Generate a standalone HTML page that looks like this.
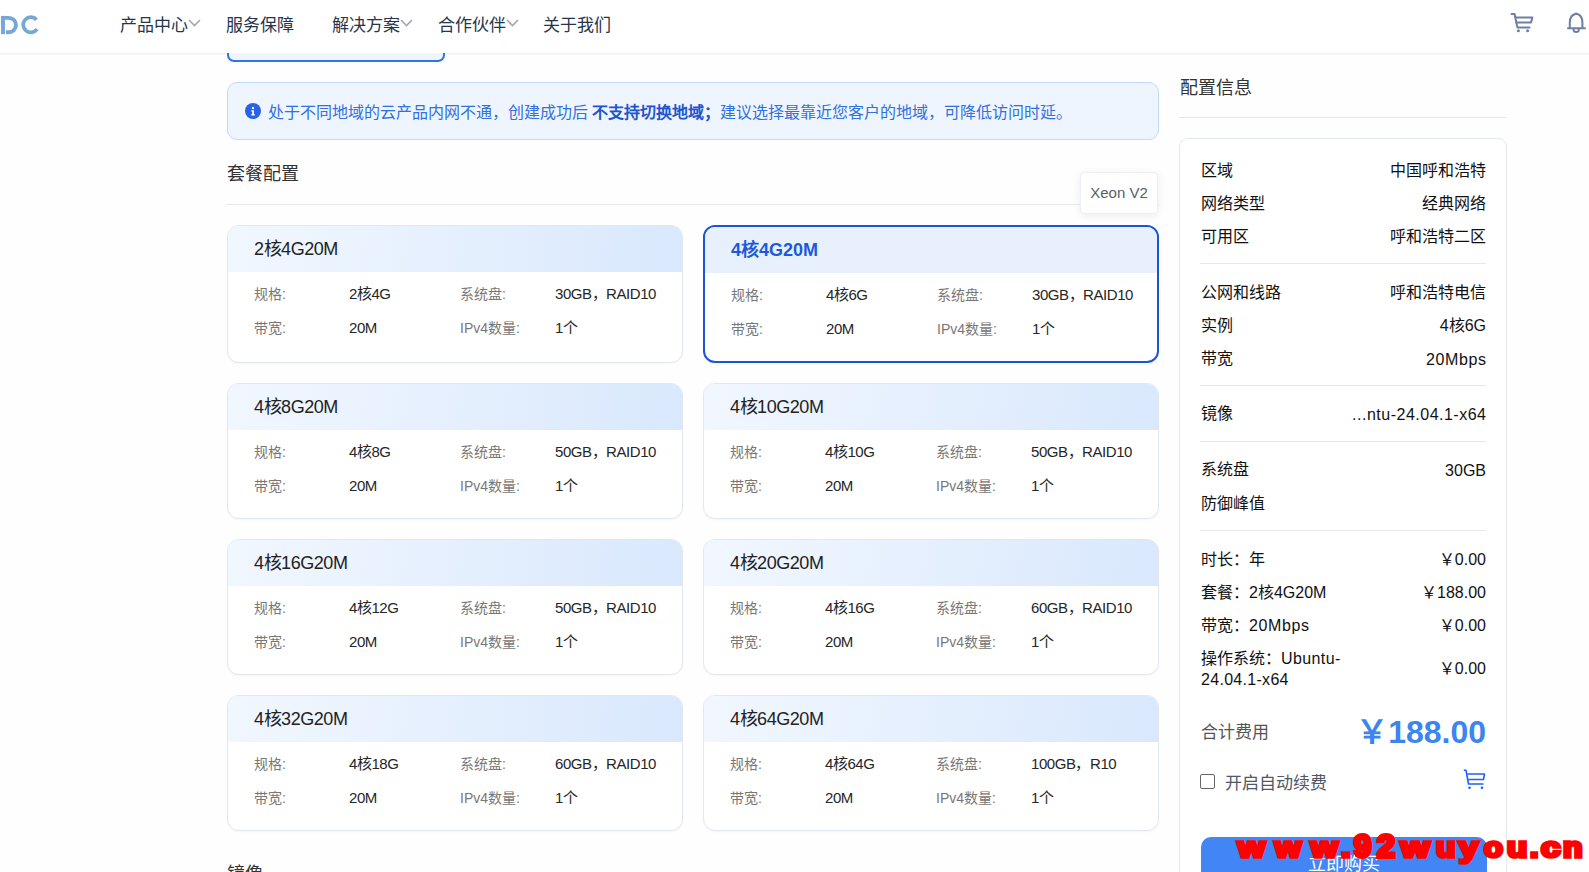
<!DOCTYPE html>
<html lang="zh-CN"><head><meta charset="utf-8">
<style>
*{box-sizing:border-box;margin:0;padding:0}
html,body{width:1589px;height:872px;overflow:hidden}
body{font-family:"Liberation Sans",sans-serif;background:#fefefe;color:#333;position:relative}
.abs{position:absolute;white-space:nowrap}
#hdr{position:absolute;left:0;top:0;width:1589px;height:53px;background:#fff;z-index:5}
#hline{position:absolute;left:0;top:53px;width:1589px;height:1px;background:#f2f2f2;box-shadow:0 1px 0 #f9f9f9}
.nav{position:absolute;top:15px;font-size:17px;line-height:22px;color:#26344c}
.chev{position:absolute;top:0}
#topbox{position:absolute;left:227px;top:20px;width:218px;height:42px;border:2px solid #2f74ee;border-radius:7px;background:#f0f5fd;z-index:2}
#alert{position:absolute;left:227px;top:82px;width:932px;height:58px;border:1px solid #c0d9fb;border-radius:10px;background:#eef5fe}
#alert .txt{position:absolute;left:40px;top:19px;font-size:16px;line-height:22px;color:#3170e0;white-space:nowrap}
#alert b{color:#1e55cf}
.sec{position:absolute;font-size:18px;line-height:24px;color:#333}
.divl{position:absolute;height:1px;background:#e3e9f1}
.card{position:absolute;width:456px;height:138px;border:1px solid #e3e8f0;border-radius:12px;background:#fff;overflow:hidden;box-shadow:0 1px 2px rgba(0,0,0,.04)}
.card .hd{position:absolute;left:0;top:0;right:0;height:46px;background:linear-gradient(100deg,#f1f7ff,#d9e8fd)}
.card .tt{position:absolute;left:26px;top:12px;font-size:18px;line-height:22px;color:#222;white-space:nowrap;letter-spacing:-0.45px}
.card .r{position:absolute;font-size:15px;line-height:20px;white-space:nowrap}
.card .lb{color:#777;font-size:14px}
.card .vl{color:#262626;letter-spacing:-0.45px}
.card.sel{border:2px solid #1a55d8}
.card.sel .hd{background:#e9f0fd}
.card.sel .tt{color:#1a5adb;font-weight:bold;letter-spacing:0}
#tip{position:absolute;left:1080px;top:172px;width:78px;height:42px;background:#fff;border:1px solid #eceff4;border-radius:4px;box-shadow:0 2px 10px rgba(0,0,0,.07);font-size:15px;line-height:40px;color:#5a5e66;text-align:center;z-index:3}
#rp{position:absolute;left:1179px;top:138px;width:328px;height:760px;border:1px solid #e4e9f1;border-radius:9px;background:#fff}
.row{position:absolute;left:21px;width:286px;font-size:16px;line-height:22px;color:#111;white-space:nowrap}
.row .v{position:absolute;right:1px;top:0}
.ls{letter-spacing:0.6px}
.idiv{position:absolute;left:20px;width:286px;height:1px;background:#e3e9f1}
#wm span{position:absolute;top:828px;font-family:"Liberation Sans",sans-serif;font-weight:bold;font-size:27.0px;line-height:40px;color:#f00;-webkit-text-stroke:3.4px #f00;transform-origin:0 31px;z-index:9}
#wm{position:absolute;left:0;top:0;z-index:9}
</style></head><body>

<div id="hline"></div>
<div id="topbox"></div>

<div id="hdr">
  <svg class="abs" style="left:0;top:0" width="42" height="40" viewBox="0 0 42 40"><g fill="none" stroke="#77a7d5" stroke-width="3.9"><path d="M3 15.9 V34.2"/><path d="M1 17.9 H8.85 A7.15 7.15 0 0 1 8.85 32.2 H6"/><path d="M36.54 19.81 A7.6 7.6 0 1 0 37.03 29.16" stroke-width="3.7"/></g></svg>
  <div class="nav" style="left:120px">产品中心</div>
  <svg class="abs" style="left:188px;top:19px" width="13" height="8" viewBox="0 0 13 8"><path d="M1 1 L6.5 6.5 L12 1" fill="none" stroke="#a4a7ad" stroke-width="1.6"/></svg>
  <div class="nav" style="left:226px">服务保障</div>
  <div class="nav" style="left:332px">解决方案</div>
  <svg class="abs" style="left:400px;top:19px" width="13" height="8" viewBox="0 0 13 8"><path d="M1 1 L6.5 6.5 L12 1" fill="none" stroke="#a4a7ad" stroke-width="1.6"/></svg>
  <div class="nav" style="left:438px">合作伙伴</div>
  <svg class="abs" style="left:506px;top:19px" width="13" height="8" viewBox="0 0 13 8"><path d="M1 1 L6.5 6.5 L12 1" fill="none" stroke="#a4a7ad" stroke-width="1.6"/></svg>
  <div class="nav" style="left:543px">关于我们</div>
  <svg class="abs" style="left:1500px;top:0" width="89" height="40" viewBox="1500 0 89 40"><g fill="none" stroke="#6f7ea3" stroke-width="2" stroke-linejoin="round" stroke-linecap="round"><path d="M1511.5 14 H1514.6 L1517.4 27.4 H1529.6"/><path d="M1515.3 17.4 H1532.4 L1531 22.6 H1516.3"/><path d="M1568 28.3 H1585 M1569.8 28.3 V22.5 C1569.8 17.5 1572 14.6 1576.2 13.8 C1580.4 14.6 1582.4 17.5 1582.4 22.5 V28.3"/><path d="M1573.6 29.5 A2.6 2.6 0 0 0 1578.8 29.5"/></g><circle cx="1518.4" cy="30.8" r="1.5" fill="#6f7ea3"/><circle cx="1527.6" cy="30.8" r="1.5" fill="#6f7ea3"/><circle cx="1576.2" cy="13.6" r="1.1" fill="#6f7ea3"/></svg>
</div>

<div id="alert">
  <svg class="abs" style="left:17px;top:20px" width="16" height="16" viewBox="0 0 16 16"><circle cx="8" cy="8" r="8" fill="#2862e6"/><circle cx="8" cy="5.1" r="1.2" fill="#fff"/><path d="M6.3 7.3 H8.9 V11.2 H9.9 V12.4 H6.2 V11.2 H7.2 V8.4 H6.3 Z" fill="#fff"/></svg>
  <div class="txt">处于不同地域的云产品内网不通，创建成功后 <b>不支持切换地域；</b>建议选择最靠近您客户的地域，可降低访问时延。</div>
</div>

<div class="sec" style="left:227px;top:162px">套餐配置</div>
<div class="divl" style="left:227px;top:204px;width:932px"></div>
<div class="sec" style="left:227px;top:862px">镜像</div>
<div id="tip">Xeon V2</div>

<div class="card" style="left:227px;top:225px;height:138px"><div class="hd"></div><div class="tt">2核4G20M</div><div class="r lb" style="left:26px;top:58px">规格:</div><div class="r vl" style="left:121px;top:58px">2核4G</div><div class="r lb" style="left:232px;top:58px">系统盘:</div><div class="r vl" style="left:327px;top:58px">30GB，RAID10</div><div class="r lb" style="left:26px;top:92px">带宽:</div><div class="r vl" style="left:121px;top:92px">20M</div><div class="r lb" style="left:232px;top:92px">IPv4数量:</div><div class="r vl" style="left:327px;top:92px">1个</div></div>
<div class="card sel" style="left:703px;top:225px;height:138px"><div class="hd"></div><div class="tt">4核4G20M</div><div class="r lb" style="left:26px;top:58px">规格:</div><div class="r vl" style="left:121px;top:58px">4核6G</div><div class="r lb" style="left:232px;top:58px">系统盘:</div><div class="r vl" style="left:327px;top:58px">30GB，RAID10</div><div class="r lb" style="left:26px;top:92px">带宽:</div><div class="r vl" style="left:121px;top:92px">20M</div><div class="r lb" style="left:232px;top:92px">IPv4数量:</div><div class="r vl" style="left:327px;top:92px">1个</div></div>
<div class="card" style="left:227px;top:383px;height:136px"><div class="hd"></div><div class="tt">4核8G20M</div><div class="r lb" style="left:26px;top:58px">规格:</div><div class="r vl" style="left:121px;top:58px">4核8G</div><div class="r lb" style="left:232px;top:58px">系统盘:</div><div class="r vl" style="left:327px;top:58px">50GB，RAID10</div><div class="r lb" style="left:26px;top:92px">带宽:</div><div class="r vl" style="left:121px;top:92px">20M</div><div class="r lb" style="left:232px;top:92px">IPv4数量:</div><div class="r vl" style="left:327px;top:92px">1个</div></div>
<div class="card" style="left:703px;top:383px;height:136px"><div class="hd"></div><div class="tt">4核10G20M</div><div class="r lb" style="left:26px;top:58px">规格:</div><div class="r vl" style="left:121px;top:58px">4核10G</div><div class="r lb" style="left:232px;top:58px">系统盘:</div><div class="r vl" style="left:327px;top:58px">50GB，RAID10</div><div class="r lb" style="left:26px;top:92px">带宽:</div><div class="r vl" style="left:121px;top:92px">20M</div><div class="r lb" style="left:232px;top:92px">IPv4数量:</div><div class="r vl" style="left:327px;top:92px">1个</div></div>
<div class="card" style="left:227px;top:539px;height:136px"><div class="hd"></div><div class="tt">4核16G20M</div><div class="r lb" style="left:26px;top:58px">规格:</div><div class="r vl" style="left:121px;top:58px">4核12G</div><div class="r lb" style="left:232px;top:58px">系统盘:</div><div class="r vl" style="left:327px;top:58px">50GB，RAID10</div><div class="r lb" style="left:26px;top:92px">带宽:</div><div class="r vl" style="left:121px;top:92px">20M</div><div class="r lb" style="left:232px;top:92px">IPv4数量:</div><div class="r vl" style="left:327px;top:92px">1个</div></div>
<div class="card" style="left:703px;top:539px;height:136px"><div class="hd"></div><div class="tt">4核20G20M</div><div class="r lb" style="left:26px;top:58px">规格:</div><div class="r vl" style="left:121px;top:58px">4核16G</div><div class="r lb" style="left:232px;top:58px">系统盘:</div><div class="r vl" style="left:327px;top:58px">60GB，RAID10</div><div class="r lb" style="left:26px;top:92px">带宽:</div><div class="r vl" style="left:121px;top:92px">20M</div><div class="r lb" style="left:232px;top:92px">IPv4数量:</div><div class="r vl" style="left:327px;top:92px">1个</div></div>
<div class="card" style="left:227px;top:695px;height:136px"><div class="hd"></div><div class="tt">4核32G20M</div><div class="r lb" style="left:26px;top:58px">规格:</div><div class="r vl" style="left:121px;top:58px">4核18G</div><div class="r lb" style="left:232px;top:58px">系统盘:</div><div class="r vl" style="left:327px;top:58px">60GB，RAID10</div><div class="r lb" style="left:26px;top:92px">带宽:</div><div class="r vl" style="left:121px;top:92px">20M</div><div class="r lb" style="left:232px;top:92px">IPv4数量:</div><div class="r vl" style="left:327px;top:92px">1个</div></div>
<div class="card" style="left:703px;top:695px;height:136px"><div class="hd"></div><div class="tt">4核64G20M</div><div class="r lb" style="left:26px;top:58px">规格:</div><div class="r vl" style="left:121px;top:58px">4核64G</div><div class="r lb" style="left:232px;top:58px">系统盘:</div><div class="r vl" style="left:327px;top:58px">100GB，R10</div><div class="r lb" style="left:26px;top:92px">带宽:</div><div class="r vl" style="left:121px;top:92px">20M</div><div class="r lb" style="left:232px;top:92px">IPv4数量:</div><div class="r vl" style="left:327px;top:92px">1个</div></div>

<div class="sec" style="left:1180px;top:76px">配置信息</div>
<div class="divl" style="left:1179px;top:117px;width:328px"></div>

<div id="rp">
<div class="row" style="top:21px">区域<span class="v">中国呼和浩特</span></div>
<div class="row" style="top:54px">网络类型<span class="v">经典网络</span></div>
<div class="row" style="top:87px">可用区<span class="v">呼和浩特二区</span></div>
<div class="idiv" style="top:124px"></div>
<div class="row" style="top:143px">公网和线路<span class="v">呼和浩特电信</span></div>
<div class="row" style="top:176px">实例<span class="v">4核6G</span></div>
<div class="row" style="top:209px">带宽<span class="v ls" style="right:0.4px;top:1px">20Mbps</span></div>
<div class="idiv" style="top:246px"></div>
<div class="row" style="top:264px">镜像<span class="v" style="letter-spacing:0.5px;right:0.5px;top:1px">...ntu-24.04.1-x64</span></div>
<div class="idiv" style="top:302px"></div>
<div class="row" style="top:320px">系统盘<span class="v" style="top:1px">30GB</span></div>
<div class="row" style="top:354px">防御峰值<span class="v"></span></div>
<div class="idiv" style="top:391px"></div>
<div class="row" style="top:410px">时长：年<span class="v">￥0.00</span></div>
<div class="row" style="top:443px">套餐：2核4G20M<span class="v">￥188.00</span></div>
<div class="row" style="top:476px">带宽：<span class="ls">20Mbps</span><span class="v">￥0.00</span></div>
<div class="row" style="top:509px;line-height:21px">操作系统：<span style="letter-spacing:0.4px">Ubuntu-</span><br><span style="letter-spacing:0.3px">24.04.1-x64</span><span class="v" style="top:10px">￥0.00</span></div>
<div class="abs" style="left:21px;top:582px;font-size:17px;line-height:24px;color:#555">合计费用</div>
<div class="abs" style="right:20px;top:573px;font-size:32px;line-height:40px;color:#3d84f0;font-weight:bold">￥188.00</div>
<div class="abs" style="left:20px;top:635px;width:15px;height:15px;border:1px solid #666;border-radius:2px;background:#fff"></div>
<div class="abs" style="left:45px;top:633px;font-size:17px;line-height:24px;color:#4f5868">开启自动续费</div>
<svg class="abs" style="left:283px;top:630px" width="23" height="21" viewBox="0 0 23 21"><g fill="none" stroke="#1f60f8" stroke-width="1.6" stroke-linejoin="round"><path d="M0.8 1.2 H3 L5.5 15 H20.5"/><path d="M4.2 5 H21.5 L20.5 10.5 H5.2"/></g><circle cx="6.5" cy="18.8" r="1.3" fill="#1f60f8"/><circle cx="19" cy="18.8" r="1.3" fill="#1f60f8"/></svg>
<div class="abs" style="left:21px;top:698px;width:286px;height:56px;background:#4285f4;border-radius:10px;color:#fff;font-size:18px;line-height:55px;text-align:center">立即购买</div>
</div>
<div id="wm"><span style="left:1238.3px;transform:scale(1.288,1.000)">w</span><span style="left:1275.0px;transform:scale(1.244,1.000)">w</span><span style="left:1310.6px;transform:scale(1.276,1.000)">w</span><span style="left:1341.0px;transform:scale(1.286,1.000)">.</span><span style="left:1353.5px;transform:scale(1.159,1.130)">9</span><span style="left:1377.2px;transform:scale(1.206,1.130)">2</span><span style="left:1400.7px;transform:scale(1.360,1.000)">w</span><span style="left:1435.7px;transform:scale(1.176,1.000)">u</span><span style="left:1459.0px;transform:scale(1.284,1.000)">y</span><span style="left:1483.8px;transform:scale(1.144,1.000)">o</span><span style="left:1507.0px;transform:scale(1.224,1.000)">u</span><span style="left:1530.0px;transform:scale(1.114,1.000)">.</span><span style="left:1541.0px;transform:scale(1.288,1.000)">c</span><span style="left:1563.4px;transform:scale(1.182,1.000)">n</span></div>

</body></html>
